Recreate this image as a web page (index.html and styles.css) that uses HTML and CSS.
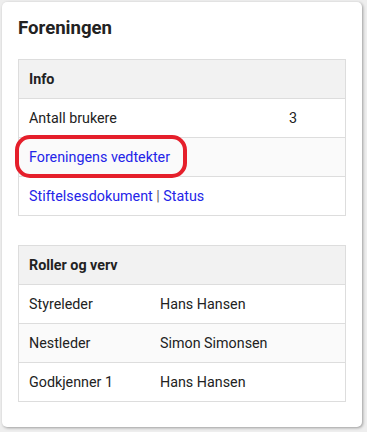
FILE: index.html
```html
<!DOCTYPE html>
<html lang="no">
<head>
    <meta charset="UTF-8">
    <meta name="viewport" content="width=device-width, initial-scale=1.0">
    <title>Foreningen</title>
    <link rel="stylesheet" href="styles.css">
</head>
<body>
    <div class="card">
        <h2>Foreningen</h2>

        <table class="info">
            <thead>
                <tr><th colspan="2">Info</th></tr>
            </thead>
            <tbody>
                <tr>
                    <td class="label">Antall brukere</td>
                    <td>3</td>
                </tr>
                <tr>
                    <td colspan="2">
                        <span class="marked">
                            <a href="#">Foreningens vedtekter</a>
                        </span>
                    </td>
                </tr>
                <tr>
                    <td colspan="2"><a href="#">Stiftelsesdokument</a> <span class="sep">|</span> <a href="#">Status</a></td>
                </tr>
            </tbody>
        </table>

        <table class="roles">
            <thead>
                <tr><th colspan="2">Roller og verv</th></tr>
            </thead>
            <tbody>
                <tr>
                    <td class="label">Styreleder</td>
                    <td>Hans Hansen</td>
                </tr>
                <tr>
                    <td class="label">Nestleder</td>
                    <td>Simon Simonsen</td>
                </tr>
                <tr>
                    <td class="label">Godkjenner 1</td>
                    <td>Hans Hansen</td>
                </tr>
            </tbody>
        </table>
    </div>
</body>
</html>
```

FILE: styles.css
```css
body {
    margin: 0;
    padding: 2px 5px 5px 2px;
    background: #eeeeee;
    font-family: Roboto, "Liberation Sans", sans-serif;
    font-size: 14.3px;
    color: #222222;
}

.card {
    width: 328px;
    height: 393px;
    padding: 16px;
    background: #ffffff;
    border-radius: 5px;
    box-shadow: 1px 1px 3px rgba(0, 0, 0, 0.35);
}

h2 {
    margin: 0 0 20px 0;
    font-size: 18.6px;
    line-height: 21px;
    font-weight: bold;
    color: #222222;
}

table {
    width: 100%;
    border-collapse: collapse;
    border: 1px solid #dddddd;
}

th, td {
    height: 38px;
    padding: 0 10px;
    text-align: left;
    border-top: 1px solid #dddddd;
}

th {
    background: #f2f2f2;
    font-weight: bold;
}

tbody tr:nth-child(even) td {
    background: #fafafa;
}

.info {
    margin-bottom: 29px;
}

.info .label {
    width: 240px;
}

.roles .label {
    width: 111px;
}

a {
    color: #2424e8;
    text-decoration: none;
}

.sep {
    color: #666666;
}

.marked {
    position: relative;
}

.marked::after {
    content: "";
    position: absolute;
    left: -14px;
    right: -17px;
    top: -14px;
    bottom: -13px;
    border: 4px solid #e51f2b;
    border-radius: 15px;
}
```
